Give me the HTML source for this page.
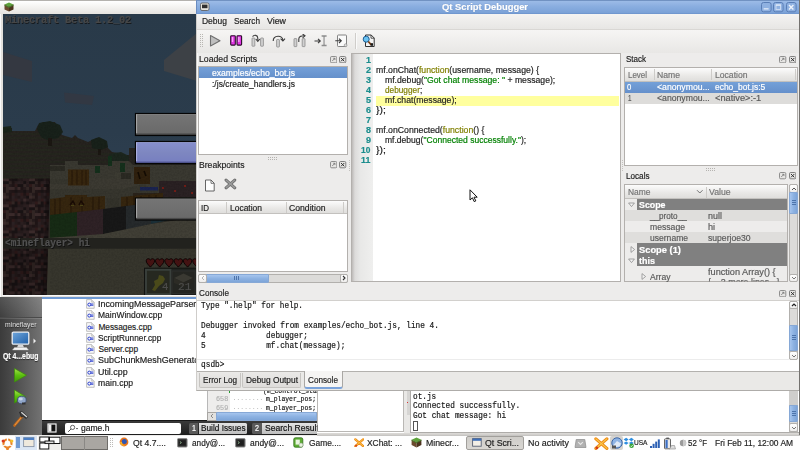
<!DOCTYPE html>
<html><head><meta charset="utf-8"><title>Qt Script Debugger</title>
<style>
html,body{margin:0;padding:0;}
body{width:800px;height:450px;overflow:hidden;position:relative;background:#edeceb;font-family:"Liberation Sans",sans-serif;}
div,span,svg{position:absolute;box-sizing:border-box;}
.t{white-space:pre;line-height:12px;height:12px;font-size:8.3px;color:#1f1f1f;transform-origin:0 50%;-webkit-text-stroke:.18px currentColor;}
.m{font-family:"Liberation Mono",monospace;font-size:8.3px;color:#151515;}
.px{font-family:"Liberation Mono",monospace;font-size:10px;font-weight:bold;}
.b{font-weight:bold;}
.w{color:#fff;}
.g{color:#747474;}
.g2{color:#5a5a5a;}
.tl{color:#1b8d8d;font-weight:bold;}
.kw{position:static;color:#808000;}
.st{position:static;color:#008000;}
.sm{font-size:7.4px;}
.hd{background:linear-gradient(#fcfcfc,#e9e8e6 60%,#dfdedc);border-bottom:1px solid #c3c1be;}
.sel{background:linear-gradient(#74a0d8,#6590cb);}
.sb{background:#dcdbd9;border:1px solid #b2b0ad;border-radius:2px;}
.th{background:linear-gradient(90deg,#a6c5ee,#8db2e2 50%,#7ea5d8);border:1px solid #86a8d6;border-radius:1px;}
.thh{background:linear-gradient(#a6c5ee,#8db2e2 50%,#7ea5d8);border:1px solid #86a8d6;border-radius:1px;}
.btn{background:linear-gradient(#ffffff,#eeedec);border:1px solid #b2b0ad;border-radius:2px;}
.dk{border:1px solid #7d7b78;border-radius:1.5px;background:#e4e3e1;}
</style></head><body>
<div style="left:0px;top:296px;width:800px;height:139px;background:#fff;"></div><div style="left:0px;top:297px;width:42px;height:138px;background:linear-gradient(90deg,#3b3b3b,#565656 50%,#737373);"></div><div style="left:0px;top:297px;width:42px;height:21px;background:linear-gradient(rgba(255,255,255,.12),rgba(255,255,255,.02));border-bottom:1px solid #4a4a4a;"></div><div style="left:0px;top:318px;width:42px;height:1px;background:rgba(255,255,255,.12);"></div><div style="left:42px;top:297px;width:155px;height:1.5px;background:#6f9ad3;"></div><svg style="left:11px;top:331px;" width="20" height="20" viewBox="0 0 20 20"><defs><linearGradient id="mg" x1="0" y1="0" x2="1" y2="1"><stop offset="0" stop-color="#6fa6dc"/><stop offset="1" stop-color="#1f5fa8"/></linearGradient></defs><rect x="1.2" y="1.2" width="16.6" height="12" rx="1.2" fill="url(#mg)" stroke="#e9eef4" stroke-width="1.3"/><path d="M7 14 L12 14 L13 16.5 L6 16.5 Z" fill="#d8d8d8"/><path d="M1.5 19 L3.5 16.5 L15.5 16.5 L17.5 19 Z" fill="#f2f2f2" stroke="#bbb" stroke-width=".4"/></svg><svg style="left:32.5px;top:338px;" width="4" height="6" viewBox="0 0 4 6"><path d="M0.5 0.5 L3 3 L0.5 5.5 Z" fill="#eee"/></svg><svg style="left:13px;top:367px;" width="16" height="17" viewBox="0 0 16 17"><defs><linearGradient id="pg" x1="0" y1="0" x2="0" y2="1"><stop offset="0" stop-color="#a6e24a"/><stop offset=".5" stop-color="#5cc010"/><stop offset="1" stop-color="#3f9a08"/></linearGradient></defs><path d="M1.5 1.5 L13.5 8.2 L1.5 15 Z" fill="url(#pg)" stroke="#3c8c0a" stroke-width=".7" stroke-linejoin="round"/></svg><svg style="left:13px;top:389px;" width="16" height="18" viewBox="0 0 16 18"><path d="M1.5 1 L12.5 7.5 L1.5 14 Z" fill="url(#pg)" stroke="#3c8c0a" stroke-width=".7" stroke-linejoin="round"/><ellipse cx="8.8" cy="11" rx="4.4" ry="3.8" fill="#8fa5c8" stroke="#3f4f72" stroke-width=".9"/><ellipse cx="7.8" cy="10" rx="2" ry="1.4" fill="#c8d4ea"/><rect x="9" y="13.5" width="3.5" height="2" fill="#333"/></svg><svg style="left:12px;top:410px;" width="18" height="18" viewBox="0 0 18 18"><path d="M2.5 15.5 L10.5 6" stroke="#c46a1c" stroke-width="2.6" stroke-linecap="round"/><path d="M3 15 L10 6.6" stroke="#e79a4a" stroke-width=".9"/><path d="M7.5 2.2 L9.8 1.5 L15.8 6.6 L14.2 8.6 L11.4 6.4 L9.4 7.2 Z" fill="#3a3a3a" stroke="#1c1c1c" stroke-width=".6"/><path d="M9.3 2.2 L15 7" stroke="#d4d4d4" stroke-width="1.3"/></svg><svg style="left:85.8px;top:299px;" width="9" height="10" viewBox="0 0 9 10"><path d="M0.6 0.6 L5.6 0.6 L8.2 3.2 L8.2 9.3 L0.6 9.3 Z" fill="#f7f7f7" stroke="#b3b3b3" stroke-width=".8"/><path d="M5.6 0.6 L5.6 3.2 L8.2 3.2" fill="#ddd" stroke="#b3b3b3" stroke-width=".6"/><circle cx="3.3" cy="5.6" r="1.5" fill="none" stroke="#2a3fd0" stroke-width="1"/><path d="M4.8 5 L7.4 5 M4.8 6.3 L7.4 6.3" stroke="#2a3fd0" stroke-width=".9"/></svg><svg style="left:85.8px;top:310.25px;" width="9" height="10" viewBox="0 0 9 10"><path d="M0.6 0.6 L5.6 0.6 L8.2 3.2 L8.2 9.3 L0.6 9.3 Z" fill="#f7f7f7" stroke="#b3b3b3" stroke-width=".8"/><path d="M5.6 0.6 L5.6 3.2 L8.2 3.2" fill="#ddd" stroke="#b3b3b3" stroke-width=".6"/><circle cx="3.3" cy="5.6" r="1.5" fill="none" stroke="#2a3fd0" stroke-width="1"/><path d="M4.8 5 L7.4 5 M4.8 6.3 L7.4 6.3" stroke="#2a3fd0" stroke-width=".9"/></svg><svg style="left:85.8px;top:321.5px;" width="9" height="10" viewBox="0 0 9 10"><path d="M0.6 0.6 L5.6 0.6 L8.2 3.2 L8.2 9.3 L0.6 9.3 Z" fill="#f7f7f7" stroke="#b3b3b3" stroke-width=".8"/><path d="M5.6 0.6 L5.6 3.2 L8.2 3.2" fill="#ddd" stroke="#b3b3b3" stroke-width=".6"/><circle cx="3.3" cy="5.6" r="1.5" fill="none" stroke="#2a3fd0" stroke-width="1"/><path d="M4.8 5 L7.4 5 M4.8 6.3 L7.4 6.3" stroke="#2a3fd0" stroke-width=".9"/></svg><svg style="left:85.8px;top:332.75px;" width="9" height="10" viewBox="0 0 9 10"><path d="M0.6 0.6 L5.6 0.6 L8.2 3.2 L8.2 9.3 L0.6 9.3 Z" fill="#f7f7f7" stroke="#b3b3b3" stroke-width=".8"/><path d="M5.6 0.6 L5.6 3.2 L8.2 3.2" fill="#ddd" stroke="#b3b3b3" stroke-width=".6"/><circle cx="3.3" cy="5.6" r="1.5" fill="none" stroke="#2a3fd0" stroke-width="1"/><path d="M4.8 5 L7.4 5 M4.8 6.3 L7.4 6.3" stroke="#2a3fd0" stroke-width=".9"/></svg><svg style="left:85.8px;top:344px;" width="9" height="10" viewBox="0 0 9 10"><path d="M0.6 0.6 L5.6 0.6 L8.2 3.2 L8.2 9.3 L0.6 9.3 Z" fill="#f7f7f7" stroke="#b3b3b3" stroke-width=".8"/><path d="M5.6 0.6 L5.6 3.2 L8.2 3.2" fill="#ddd" stroke="#b3b3b3" stroke-width=".6"/><circle cx="3.3" cy="5.6" r="1.5" fill="none" stroke="#2a3fd0" stroke-width="1"/><path d="M4.8 5 L7.4 5 M4.8 6.3 L7.4 6.3" stroke="#2a3fd0" stroke-width=".9"/></svg><svg style="left:85.8px;top:355.25px;" width="9" height="10" viewBox="0 0 9 10"><path d="M0.6 0.6 L5.6 0.6 L8.2 3.2 L8.2 9.3 L0.6 9.3 Z" fill="#f7f7f7" stroke="#b3b3b3" stroke-width=".8"/><path d="M5.6 0.6 L5.6 3.2 L8.2 3.2" fill="#ddd" stroke="#b3b3b3" stroke-width=".6"/><circle cx="3.3" cy="5.6" r="1.5" fill="none" stroke="#2a3fd0" stroke-width="1"/><path d="M4.8 5 L7.4 5 M4.8 6.3 L7.4 6.3" stroke="#2a3fd0" stroke-width=".9"/></svg><svg style="left:85.8px;top:366.5px;" width="9" height="10" viewBox="0 0 9 10"><path d="M0.6 0.6 L5.6 0.6 L8.2 3.2 L8.2 9.3 L0.6 9.3 Z" fill="#f7f7f7" stroke="#b3b3b3" stroke-width=".8"/><path d="M5.6 0.6 L5.6 3.2 L8.2 3.2" fill="#ddd" stroke="#b3b3b3" stroke-width=".6"/><circle cx="3.3" cy="5.6" r="1.5" fill="none" stroke="#2a3fd0" stroke-width="1"/><path d="M4.8 5 L7.4 5 M4.8 6.3 L7.4 6.3" stroke="#2a3fd0" stroke-width=".9"/></svg><svg style="left:85.8px;top:377.75px;" width="9" height="10" viewBox="0 0 9 10"><path d="M0.6 0.6 L5.6 0.6 L8.2 3.2 L8.2 9.3 L0.6 9.3 Z" fill="#f7f7f7" stroke="#b3b3b3" stroke-width=".8"/><path d="M5.6 0.6 L5.6 3.2 L8.2 3.2" fill="#ddd" stroke="#b3b3b3" stroke-width=".6"/><circle cx="3.3" cy="5.6" r="1.5" fill="none" stroke="#2a3fd0" stroke-width="1"/><path d="M4.8 5 L7.4 5 M4.8 6.3 L7.4 6.3" stroke="#2a3fd0" stroke-width=".9"/></svg><div style="left:42px;top:420px;width:275px;height:15px;background:linear-gradient(#3a3a3a,#1d1d1d);border-top:1px solid #161616;"></div><svg style="left:47px;top:423px;" width="10" height="10" viewBox="0 0 10 10"><rect x="1" y="1" width="8" height="8" fill="#111" stroke="#f2f2f2" stroke-width="1.2"/><rect x="1.4" y="1.4" width="3" height="7.2" fill="#f2f2f2"/></svg><div style="left:64.5px;top:422.5px;width:116px;height:11.5px;background:#fff;border-radius:2px;"></div><svg style="left:67px;top:424px;" width="12" height="9" viewBox="0 0 12 9"><circle cx="5.6" cy="3.4" r="2.1" fill="none" stroke="#555" stroke-width=".9"/><path d="M4 5 L1.2 7.8" stroke="#555" stroke-width="1"/><path d="M9 4.6 L11 4.6" stroke="#555" stroke-width=".9"/></svg><div style="left:189px;top:422.5px;width:9px;height:11.5px;background:#5a5a5a;border-radius:1.5px 0 0 1.5px;"></div><div style="left:198.5px;top:422.5px;width:48.5px;height:11.5px;background:linear-gradient(#e4e4e4,#bdbdbd);border-radius:0 1.5px 1.5px 0;"></div><div style="left:252px;top:422.5px;width:9.5px;height:11.5px;background:#5a5a5a;border-radius:1.5px 0 0 1.5px;"></div><div style="left:262px;top:422.5px;width:55px;height:11.5px;background:linear-gradient(#e4e4e4,#bdbdbd);"></div><div style="left:207px;top:388px;width:110px;height:24px;background:#fff;border-left:1px solid #b8b8b8;"></div><div style="left:208px;top:388px;width:21.5px;height:24px;background:#eeedec;"></div><div style="left:207px;top:411.5px;width:110px;height:9px;background:#e2e1df;border:1px solid #a8a6a3;"></div><div class="thh" style="left:215.5px;top:411.5px;width:101.5px;height:9px;"></div><svg style="left:208px;top:412px;" width="8" height="8" viewBox="0 0 8 8"><path d="M5 2 L3 4 L5 6" fill="none" stroke="#888" stroke-width="1"/></svg><svg style="left:234px;top:399.0px;" width="32" height="2" viewBox="0 0 32 2"><rect x="0.0" y="0" width="1" height="1" fill="#c4c4c4"/><rect x="3.9" y="0" width="1" height="1" fill="#c4c4c4"/><rect x="7.7" y="0" width="1" height="1" fill="#c4c4c4"/><rect x="11.6" y="0" width="1" height="1" fill="#c4c4c4"/><rect x="15.4" y="0" width="1" height="1" fill="#c4c4c4"/><rect x="19.2" y="0" width="1" height="1" fill="#c4c4c4"/><rect x="23.1" y="0" width="1" height="1" fill="#c4c4c4"/><rect x="26.9" y="0" width="1" height="1" fill="#c4c4c4"/></svg><svg style="left:234px;top:407.8px;" width="32" height="2" viewBox="0 0 32 2"><rect x="0.0" y="0" width="1" height="1" fill="#c4c4c4"/><rect x="3.9" y="0" width="1" height="1" fill="#c4c4c4"/><rect x="7.7" y="0" width="1" height="1" fill="#c4c4c4"/><rect x="11.6" y="0" width="1" height="1" fill="#c4c4c4"/><rect x="15.4" y="0" width="1" height="1" fill="#c4c4c4"/><rect x="19.2" y="0" width="1" height="1" fill="#c4c4c4"/><rect x="23.1" y="0" width="1" height="1" fill="#c4c4c4"/><rect x="26.9" y="0" width="1" height="1" fill="#c4c4c4"/></svg><div style="left:229px;top:389px;width:1px;height:4px;background:#1f9a2a;"></div><div style="left:317px;top:390px;width:87px;height:42.3px;background:#fff;border:1px solid #b9b7b4;"></div><div style="left:404px;top:390px;width:6.5px;height:45px;background:#e9e8e6;"></div><div style="left:410px;top:390px;width:390px;height:43.3px;background:#fff;border:1px solid #aeaca9;border-right:none;"></div><div style="left:407.3px;top:391px;width:2.7px;height:24px;background:#d6d5d3;"></div><div style="left:407.3px;top:401.5px;width:1px;height:1.5px;background:#d33;"></div><div style="left:412.5px;top:421px;width:5px;height:10px;background:#fff;border:1px solid #555;"></div><div class="sb" style="left:789px;top:391px;width:9px;height:42px;"></div><div style="left:789px;top:391px;width:9px;height:14px;background:#cfcecc;"></div><div class="th" style="left:789px;top:405px;width:9px;height:17px;"></div><svg style="left:791.5px;top:410.5px;" width="4" height="6" viewBox="0 0 4 6"><rect x="0" y="0" width="4" height="1" fill="#4d74ab"/><rect x="0" y="2" width="4" height="1" fill="#4d74ab"/><rect x="0" y="4" width="4" height="1" fill="#4d74ab"/></svg><div class="btn" style="left:789px;top:422.5px;width:9px;height:9.5px;"></div><svg style="left:789.5px;top:423.5px;" width="8" height="8" viewBox="0 0 8 8"><path d="M2 3 L4 5 L6 3" fill="none" stroke="#777" stroke-width="1"/></svg><div style="left:317px;top:433px;width:483px;height:3px;background:linear-gradient(#dddbd8,#d2d0cd 50%,#b0aeab 75%,#f4f4f3);"></div>
<span class="t w sm" style="left:5px;top:319.0px;transform:scaleX(0.924);color:#e2e2e2;text-shadow:0 1px 1px #222;-webkit-text-stroke:0;">mineflayer</span>
<span class="t b w" style="left:2.5px;top:350.0px;transform:scaleX(0.828);text-shadow:0 1px 1px #222;">Qt 4...ebug</span>
<span class="t" style="left:80.8px;top:422.0px;transform:scaleX(1.029);">game.h</span>
<span class="t w" style="left:191.5px;top:422.0px;transform:scaleX(0.865);">1</span>
<span class="t" style="left:200.5px;top:422.0px;transform:scaleX(0.995);color:#111;">Build Issues</span>
<span class="t w" style="left:255px;top:422.0px;transform:scaleX(0.865);">2</span>
<span class="t" style="left:264.5px;top:422.0px;transform:scaleX(1.033);color:#111;clip-path:inset(0 5.5px 0 0);">Search Results</span>
<span class="t m" style="left:215.5px;top:393.3px;transform:scaleX(0.916);color:#b2b2b2;font-size:7.4px;">658</span>
<span class="t m" style="left:215.5px;top:402.0px;transform:scaleX(0.916);color:#b2b2b2;font-size:7.4px;">659</span>
<span class="t m" style="left:262.7px;top:384.6px;transform:scaleX(0.866);font-size:7.4px;">(m_control_sta</span>
<span class="t m" style="left:266px;top:393.3px;transform:scaleX(0.867);font-size:7.4px;">m_player_pos;</span>
<span class="t m" style="left:266px;top:402.0px;transform:scaleX(0.867);font-size:7.4px;">m_player_pos;</span>
<span class="t m" style="left:412.8px;top:390.5px;transform:scaleX(0.931);">ot.js</span>
<span class="t m" style="left:412.8px;top:400.3px;transform:scaleX(0.936);">Connected successfully.</span>
<span class="t m" style="left:412.8px;top:410.0px;transform:scaleX(0.936);">Got chat message: hi</span>
<span class="t" style="left:98.4px;top:298.0px;transform:scaleX(1.071);">IncomingMessageParser.cpp</span>
<span class="t" style="left:98.4px;top:309.2px;transform:scaleX(1.022);">MainWindow.cpp</span>
<span class="t" style="left:98.4px;top:320.5px;">Messages.cpp</span>
<span class="t" style="left:98.4px;top:331.8px;transform:scaleX(0.994);">ScriptRunner.cpp</span>
<span class="t" style="left:98.4px;top:343.0px;">Server.cpp</span>
<span class="t" style="left:98.4px;top:354.2px;transform:scaleX(1.080);">SubChunkMeshGenerator.cpp</span>
<span class="t" style="left:98.4px;top:365.5px;transform:scaleX(1.070);">Util.cpp</span>
<span class="t" style="left:98.4px;top:376.8px;transform:scaleX(1.042);">main.cpp</span>
<div style="left:0px;top:0px;width:197px;height:297px;background:#e3e1dd;border-left:1px solid #fafafa;"></div><div style="left:0px;top:0px;width:197px;height:13px;background:linear-gradient(#ffffff,#efeeec 50%,#e2e0dc);"></div><div style="left:2.5px;top:13px;width:1px;height:282px;background:linear-gradient(#293a49 0,#2b3c4c 40%,#26231f 41%,#26231f 58%,#241a1b 59%,#241a1b);"></div><div style="left:2px;top:294.5px;width:195px;height:1px;background:#f8f8f8;"></div><svg style="left:3px;top:13px;" width="194" height="282" viewBox="0 0 194 282"><defs><linearGradient id="sky" x1="0" y1="0" x2="0" y2="1"><stop offset="0" stop-color="#293a49"/><stop offset=".7" stop-color="#2b3c4c"/><stop offset="1" stop-color="#2e3f50"/></linearGradient><filter id="nz" x="0" y="0" width="100%" height="100%" color-interpolation-filters="sRGB"><feTurbulence type="fractalNoise" baseFrequency="0.55" numOctaves="2" seed="7" result="n"/><feColorMatrix in="n" type="matrix" values="0 0 0 0 0  0 0 0 0 0  0 0 0 0 0  0 0 0 1.6 -0.55"/><feComposite operator="in" in2="SourceGraphic"/></filter><linearGradient id="bg1" x1="0" y1="0" x2="0" y2="1"><stop offset="0" stop-color="#b8b8b8"/><stop offset=".07" stop-color="#747474"/><stop offset=".5" stop-color="#6f6f6f"/><stop offset=".88" stop-color="#6a6a6a"/><stop offset=".93" stop-color="#4a4a4a"/><stop offset="1" stop-color="#444"/></linearGradient><linearGradient id="bg2" x1="0" y1="0" x2="0" y2="1"><stop offset="0" stop-color="#c4c8f2"/><stop offset=".07" stop-color="#868ecc"/><stop offset=".5" stop-color="#7e87c0"/><stop offset=".88" stop-color="#7880c0"/><stop offset=".93" stop-color="#5a60a0"/><stop offset="1" stop-color="#545a98"/></linearGradient><pattern id="np" width="26.1" height="26.1" patternUnits="userSpaceOnUse"><rect width="26.1" height="26.1" fill="#241a1b"/><rect x="0.0" y="0.0" width="2.9" height="2.9" fill="#3a2a2a"/><rect x="2.9" y="0.0" width="2.9" height="2.9" fill="#322624"/><rect x="5.8" y="0.0" width="2.9" height="2.9" fill="#1e1415"/><rect x="8.7" y="0.0" width="2.9" height="2.9" fill="#2b2022"/><rect x="14.5" y="0.0" width="2.9" height="2.9" fill="#201617"/><rect x="17.4" y="0.0" width="2.9" height="2.9" fill="#2a1e1f"/><rect x="23.2" y="0.0" width="2.9" height="2.9" fill="#181213"/><rect x="2.9" y="2.9" width="2.9" height="2.9" fill="#1e1415"/><rect x="5.8" y="2.9" width="2.9" height="2.9" fill="#201617"/><rect x="8.7" y="2.9" width="2.9" height="2.9" fill="#2a1e1f"/><rect x="11.6" y="2.9" width="2.9" height="2.9" fill="#2e1a1a"/><rect x="14.5" y="2.9" width="2.9" height="2.9" fill="#2b2022"/><rect x="20.3" y="2.9" width="2.9" height="2.9" fill="#3a2a2a"/><rect x="23.2" y="2.9" width="2.9" height="2.9" fill="#2a1e1f"/><rect x="2.9" y="5.8" width="2.9" height="2.9" fill="#2a1e1f"/><rect x="5.8" y="5.8" width="2.9" height="2.9" fill="#2e1a1a"/><rect x="8.7" y="5.8" width="2.9" height="2.9" fill="#322624"/><rect x="11.6" y="5.8" width="2.9" height="2.9" fill="#181213"/><rect x="14.5" y="5.8" width="2.9" height="2.9" fill="#2e1a1a"/><rect x="17.4" y="5.8" width="2.9" height="2.9" fill="#181213"/><rect x="23.2" y="5.8" width="2.9" height="2.9" fill="#181213"/><rect x="0.0" y="8.7" width="2.9" height="2.9" fill="#3a2a2a"/><rect x="2.9" y="8.7" width="2.9" height="2.9" fill="#3a2a2a"/><rect x="5.8" y="8.7" width="2.9" height="2.9" fill="#201617"/><rect x="8.7" y="8.7" width="2.9" height="2.9" fill="#181213"/><rect x="11.6" y="8.7" width="2.9" height="2.9" fill="#181213"/><rect x="20.3" y="8.7" width="2.9" height="2.9" fill="#2a1e1f"/><rect x="23.2" y="8.7" width="2.9" height="2.9" fill="#2a1e1f"/><rect x="0.0" y="11.6" width="2.9" height="2.9" fill="#181213"/><rect x="2.9" y="11.6" width="2.9" height="2.9" fill="#181213"/><rect x="5.8" y="11.6" width="2.9" height="2.9" fill="#322624"/><rect x="8.7" y="11.6" width="2.9" height="2.9" fill="#1e1415"/><rect x="11.6" y="11.6" width="2.9" height="2.9" fill="#2a1e1f"/><rect x="14.5" y="11.6" width="2.9" height="2.9" fill="#2b2022"/><rect x="17.4" y="11.6" width="2.9" height="2.9" fill="#2a1e1f"/><rect x="20.3" y="11.6" width="2.9" height="2.9" fill="#181213"/><rect x="23.2" y="11.6" width="2.9" height="2.9" fill="#2a1e1f"/><rect x="0.0" y="14.5" width="2.9" height="2.9" fill="#2e1a1a"/><rect x="2.9" y="14.5" width="2.9" height="2.9" fill="#322624"/><rect x="8.7" y="14.5" width="2.9" height="2.9" fill="#1e1415"/><rect x="11.6" y="14.5" width="2.9" height="2.9" fill="#2e1a1a"/><rect x="14.5" y="14.5" width="2.9" height="2.9" fill="#181213"/><rect x="17.4" y="14.5" width="2.9" height="2.9" fill="#181213"/><rect x="20.3" y="14.5" width="2.9" height="2.9" fill="#322624"/><rect x="0.0" y="17.4" width="2.9" height="2.9" fill="#1e1415"/><rect x="2.9" y="17.4" width="2.9" height="2.9" fill="#322624"/><rect x="5.8" y="17.4" width="2.9" height="2.9" fill="#3a2a2a"/><rect x="8.7" y="17.4" width="2.9" height="2.9" fill="#3a2a2a"/><rect x="14.5" y="17.4" width="2.9" height="2.9" fill="#3a2a2a"/><rect x="17.4" y="17.4" width="2.9" height="2.9" fill="#1e1415"/><rect x="23.2" y="17.4" width="2.9" height="2.9" fill="#322624"/><rect x="0.0" y="20.3" width="2.9" height="2.9" fill="#1e1415"/><rect x="2.9" y="20.3" width="2.9" height="2.9" fill="#322624"/><rect x="5.8" y="20.3" width="2.9" height="2.9" fill="#201617"/><rect x="8.7" y="20.3" width="2.9" height="2.9" fill="#1e1415"/><rect x="11.6" y="20.3" width="2.9" height="2.9" fill="#181213"/><rect x="14.5" y="20.3" width="2.9" height="2.9" fill="#201617"/><rect x="17.4" y="20.3" width="2.9" height="2.9" fill="#201617"/><rect x="20.3" y="20.3" width="2.9" height="2.9" fill="#181213"/><rect x="0.0" y="23.2" width="2.9" height="2.9" fill="#322624"/><rect x="5.8" y="23.2" width="2.9" height="2.9" fill="#1e1415"/><rect x="8.7" y="23.2" width="2.9" height="2.9" fill="#2e1a1a"/><rect x="14.5" y="23.2" width="2.9" height="2.9" fill="#2b2022"/><rect x="17.4" y="23.2" width="2.9" height="2.9" fill="#2e1a1a"/><rect x="20.3" y="23.2" width="2.9" height="2.9" fill="#1e1415"/><rect x="23.2" y="23.2" width="2.9" height="2.9" fill="#2e1a1a"/></pattern></defs><rect x="0" y="0" width="194" height="170" fill="url(#sky)"/><rect x="0" y="165" width="194" height="117" fill="#2b2a24"/><path d="M0 39 L29 48 L29 69 L0 62 Z" fill="#343841"/><path d="M61 79.5 L91 83 L89 92 L62 89.5 Z" fill="#323843"/><path d="M161 47 L194 20 L194 68 L161 58 Z" fill="#3d4146"/><path d="M0 115 L9 115 L9 118 L32 118 L35 112 L40 109 L52 109 L55 115 L59 122 L69 125 L72 122 L75 125 L85 129 L89 127 L94 125 L102 127 L105 135 L109 139 L115 140 L122 142 L132 142 L137 145 L137 170 L0 170 Z" fill="#26231f"/><path d="M0 121 L56 121 M0 125 L66 125 M0 129 L76 129 M0 133 L87 133 M0 137 L97 137 M0 141 L108 141 M0 145 L118 145 M0 149 L128 149 M0 153 L130 153 M0 157 L130 157 M0 161 L130 161 M0 165 L130 165" stroke="#22381e" stroke-width=".8" opacity=".4"/><path d="M36 110 L47 108 L57 112 L60 119 L55 125 L44 127 L38 124 L34 116 Z" fill="#18211a"/><rect x="45" y="125" width="4" height="8" fill="#1b1712"/><path d="M88 127 L96 124 L104 128 L105 134 L98 137 L89 135 Z" fill="#18211a"/><rect x="95" y="136" width="3" height="6" fill="#1b1712"/><path d="M0 114 L8 113 L9 119 L0 120 Z" fill="#1a241a"/><path d="M106 141 L118 139 L126 143 L126 150 L106 150 Z" fill="#1c261e"/><rect x="126" y="135" width="68" height="40" fill="#262420"/><path d="M47 152 L62 152 L62 148 L75 148 L75 152 L108 152 L108 148 L126 148 L130 152 L194 152 L194 200 L47 200 Z" fill="#3a3931"/><path d="M47 166 L130 166 L150 176 L194 176 L194 200 L47 200 Z" fill="#37362e"/><path d="M47 171 L80 171 L80 166 L112 166 L112 160 L140 160 L140 171 L120 176 L47 176 Z" fill="#3d3c33" opacity=".8"/><path d="M47 158 L62 158 L62 153 L47 153 Z M118 160 L128 160 L128 166 L118 166 Z" fill="#2b2a23"/><rect x="105" y="143" width="4" height="10" fill="#15301c"/><rect x="92" y="153" width="5" height="7" fill="#15301c"/><rect x="117" y="150" width="5" height="9" fill="#15301c"/><rect x="65" y="156.5" width="21" height="16" fill="#38270f"/><path d="M69 157 L69 172 M74 157 L74 172 M79 157 L79 172 M83 157 L83 172" stroke="#2a1c0b" stroke-width="1.2"/><rect x="131" y="154" width="16" height="17" fill="#30210e"/><path d="M135 159 L137 166 M141 158 L143 163" stroke="#140c04" stroke-width="1.6"/><rect x="137" y="174" width="18" height="3.5" fill="#1b2450"/><rect x="156" y="168" width="38" height="16" fill="#2a2123"/><circle cx="160" cy="175" r="1" fill="#8a1c14"/><circle cx="172" cy="178" r="1" fill="#8a1c14"/><circle cx="182" cy="173" r="1" fill="#8a1c14"/><circle cx="189" cy="180" r="1" fill="#8a1c14"/><rect x="130" y="180" width="30" height="10" fill="#2a231b"/><path d="M47 186 L62 184 L62 182 L84 182 L84 184 L102 183 L102 202 L47 204 Z" fill="#36260f"/><path d="M52 186 L52 203 M57 185 L57 203 M68 184 L68 202 M79 184 L79 202 M90 184 L90 202 M96 184 L96 202" stroke="#281a0a" stroke-width="1.2"/><path d="M67 192 L70 188 L72 192 M76 192 L78 188 L81 192" fill="none" stroke="#1a0c05" stroke-width="1.4"/><path d="M68 192.5 L71 192.5 M77 192.5 L80 192.5" stroke="#4a4416" stroke-width="1"/><path d="M118 184 L160 180 L160 196 L118 199 Z" fill="#36260f"/><path d="M124 184 L124 198 M131 183 L131 198 M138 183 L138 197 M146 182 L146 197 M153 182 L153 196" stroke="#281a0a" stroke-width="1.2"/><path d="M104 186 L116 185 L116 199 L104 200 Z" fill="#34332b"/><path d="M47 202 L74 199 L74 224 L47 225 Z" fill="#172b15"/><path d="M74 199 L100 196 L100 221 L74 224 Z" fill="#2f2226"/><path d="M100 196 L123 193 L123 217 L100 221 Z" fill="#181818"/><path d="M123 193 L148 190 L148 211 L123 217 Z" fill="#262a2c"/><path d="M148 190 L170 188 L170 206 L148 211 Z" fill="#1b3038"/><path d="M44 225 L100 221 L148 211 L194 204 L194 236 L44 236 Z" fill="#413f36"/><rect x="42" y="236" width="152" height="46" fill="#37362d"/><path d="M0 165.5 L47 165.5 L43.7 282 L0 282 Z" fill="url(#np)"/><path d="M0 236 L45 236 L43.7 282 L0 282 Z" fill="#000" opacity=".15"/><path d="M43 165.5 L47 165.5 L43.7 282 L39.7 282 Z" fill="#000" opacity=".25"/><path d="M0 115 L9 115 L9 118 L32 118 L35 112 L40 109 L52 109 L55 115 L59 122 L69 125 L72 122 L75 125 L85 129 L89 127 L94 125 L102 127 L105 135 L109 139 L115 140 L122 142 L132 142 L137 145 L137 170 L0 170 Z M47 150 L194 150 L194 282 L47 282 Z" fill="#000" filter="url(#nz)" opacity=".14"/><rect x="132.5" y="100.5" width="64" height="22" fill="url(#bg1)" stroke="#050505" stroke-width="1.2"/><rect x="133.2" y="101.3" width=".9" height="19" fill="#b4b4b4"/><rect x="132.5" y="128.5" width="64" height="22" fill="url(#bg2)" stroke="#050505" stroke-width="1.2"/><rect x="133.2" y="129.3" width=".9" height="19" fill="#b8bcec"/><rect x="132.5" y="185" width="64" height="22" fill="url(#bg1)" stroke="#050505" stroke-width="1.2"/><rect x="133.2" y="185.8" width=".9" height="19" fill="#b4b4b4"/><rect x="0" y="225" width="194" height="10.8" fill="#21211d" opacity=".96"/><path d="M0 2.6 C0 0.4 2.4 -0.4 4.2 1.6 C6 -0.4 8.4 0.4 8.4 2.6 C8.4 5 5.6 7 4.2 8.8 C2.8 7 0 5 0 2.6 Z" transform="translate(143.2,245.3)" fill="#441212" stroke="#0c0303" stroke-width="1"/><path d="M0 2.6 C0 0.4 2.4 -0.4 4.2 1.6 C6 -0.4 8.4 0.4 8.4 2.6 C8.4 5 5.6 7 4.2 8.8 C2.8 7 0 5 0 2.6 Z" transform="translate(152.5,245.3)" fill="#441212" stroke="#0c0303" stroke-width="1"/><path d="M0 2.6 C0 0.4 2.4 -0.4 4.2 1.6 C6 -0.4 8.4 0.4 8.4 2.6 C8.4 5 5.6 7 4.2 8.8 C2.8 7 0 5 0 2.6 Z" transform="translate(161.79999999999998,245.3)" fill="#441212" stroke="#0c0303" stroke-width="1"/><path d="M0 2.6 C0 0.4 2.4 -0.4 4.2 1.6 C6 -0.4 8.4 0.4 8.4 2.6 C8.4 5 5.6 7 4.2 8.8 C2.8 7 0 5 0 2.6 Z" transform="translate(171.1,245.3)" fill="#441212" stroke="#0c0303" stroke-width="1"/><path d="M0 2.6 C0 0.4 2.4 -0.4 4.2 1.6 C6 -0.4 8.4 0.4 8.4 2.6 C8.4 5 5.6 7 4.2 8.8 C2.8 7 0 5 0 2.6 Z" transform="translate(180.39999999999998,245.3)" fill="#441212" stroke="#0c0303" stroke-width="1"/><path d="M0 2.6 C0 0.4 2.4 -0.4 4.2 1.6 C6 -0.4 8.4 0.4 8.4 2.6 C8.4 5 5.6 7 4.2 8.8 C2.8 7 0 5 0 2.6 Z" transform="translate(189.7,245.3)" fill="#441212" stroke="#0c0303" stroke-width="1"/><rect x="141.5" y="255.2" width="53" height="27" fill="#20221f" stroke="#121311" stroke-width="1"/><rect x="143" y="256.8" width="24.5" height="24.4" fill="#262820" stroke="#3a403c" stroke-width="1.8"/><rect x="169" y="258" width="23" height="22.5" fill="#242521" stroke="#2c2e2b" stroke-width="1.2"/><path d="M149 277 L152 272 L151 268 L155 266 L156 262 L160 263 L162 266 L160 270 L156 273 L152 278 Z" fill="#4a4a1a"/><path d="M171 265 L180.5 260.5 L190 265 L180.5 269.5 Z" fill="#3a3932"/><path d="M171 265 L180.5 269.5 L180.5 274 L171 270 Z" fill="#2c2b25"/><path d="M190 265 L180.5 269.5 L180.5 274 L190 270 Z" fill="#262520"/></svg><div style="left:0px;top:0px;width:197px;height:13.6px;background:linear-gradient(#ffffff,#f4f3f1 45%,#e6e4e0);border-top:1px solid #b4b2ae;"></div><svg style="left:4px;top:1.5px;" width="10" height="10" viewBox="0 0 10 10"><path d="M5 0.5 L9.5 2.5 L5 4.6 L0.5 2.5 Z" fill="#5da33a"/><path d="M0.5 2.5 L5 4.6 L5 9.6 L0.5 7.4 Z" fill="#6b4a2e"/><path d="M9.5 2.5 L5 4.6 L5 9.6 L9.5 7.4 Z" fill="#4d331e"/><path d="M0.5 2.5 L5 4.6 L9.5 2.5 L9.5 3.6 L5 5.7 L0.5 3.6 Z" fill="#467f2a"/></svg>
<span class="t px" style="left:5px;top:15.3px;transform:scaleX(1.052);color:#474747;letter-spacing:-.3px;text-shadow:.8px .8px 0 #161a1e;">Minecraft Beta 1.2_02</span>
<span class="t px" style="left:5px;top:237.5px;transform:scaleX(0.944);color:#515151;text-shadow:.8px .8px 0 #121212;">&lt;mineflayer&gt; hi</span>
<span class="t px" style="left:162px;top:281.6px;transform:scaleX(1.081);color:#4c4c4a;font-weight:normal;">4</span>
<span class="t px" style="left:178px;top:281.6px;transform:scaleX(1.124);color:#4c4c4a;font-weight:normal;">21</span>
<div style="left:195.5px;top:0px;width:604.5px;height:391px;background:#edeceb;border-left:1px solid #cfcdca;border-bottom:1px solid #aeaca9;"></div><div style="left:196.5px;top:13px;width:1px;height:377px;background:#f8f8f7;"></div><div style="left:799px;top:0px;width:1px;height:435px;background:#74726f;"></div><div style="left:195.5px;top:0px;width:603.5px;height:13.5px;background:linear-gradient(#9cbbe7,#8aaee0 45%,#7aa1d7);border-top:1px solid #7192c2;border-left:1px solid #6a8cc0;border-bottom:1px solid #7097cf;"></div><svg style="left:200px;top:2px;" width="10" height="10" viewBox="0 0 10 10"><rect x="0.5" y="1" width="8.5" height="7.5" rx="1.5" fill="#e8e6e0" stroke="#555" stroke-width=".8"/><rect x="2" y="2.6" width="5.5" height="3.6" fill="#2f2f2f"/></svg><svg style="left:760.5px;top:2px;" width="11" height="11" viewBox="0 0 11 11"><rect x=".5" y=".5" width="9.6" height="9.3" rx="2" fill="#8fb1e1" stroke="#5a7eb6" stroke-width="1"/><rect x="2.6" y="6.2" width="5" height="1.3" fill="#e3ecf9"/></svg><svg style="left:773px;top:2px;" width="11" height="11" viewBox="0 0 11 11"><rect x=".5" y=".5" width="9.6" height="9.3" rx="2" fill="#8fb1e1" stroke="#5a7eb6" stroke-width="1"/><rect x="3" y="2.8" width="4.6" height="4.6" fill="none" stroke="#d3e0f4" stroke-width=".9"/><rect x="3" y="2.6" width="4.6" height="1.2" fill="#dfe9f7"/></svg><svg style="left:786px;top:2px;" width="11" height="11" viewBox="0 0 11 11"><rect x=".5" y=".5" width="9.6" height="9.3" rx="2" fill="#8fb1e1" stroke="#5a7eb6" stroke-width="1"/><path d="M3 3 L7.4 7.4 M7.4 3 L3 7.4" stroke="#eef3fb" stroke-width="1.4"/></svg><div style="left:197px;top:13.5px;width:602px;height:15.5px;background:linear-gradient(#f4f3f2,#e7e6e4);"></div><div style="left:197px;top:29px;width:602px;height:24px;background:linear-gradient(#f6f5f4,#e8e7e5);border-top:1px solid #fbfbfb;"></div><div style="left:197px;top:28.5px;width:602px;height:1px;background:#d9d7d4;"></div><svg style="left:199px;top:34px;" width="5" height="14" viewBox="0 0 5 14"><rect x="1" y="0" width="1" height="1" fill="#b9b7b3"/><rect x="1" y="2" width="1" height="1" fill="#b9b7b3"/><rect x="1" y="4" width="1" height="1" fill="#b9b7b3"/><rect x="1" y="6" width="1" height="1" fill="#b9b7b3"/><rect x="1" y="8" width="1" height="1" fill="#b9b7b3"/><rect x="1" y="10" width="1" height="1" fill="#b9b7b3"/><rect x="1" y="12" width="1" height="1" fill="#b9b7b3"/><rect x="3" y="0" width="1" height="1" fill="#b9b7b3"/><rect x="3" y="2" width="1" height="1" fill="#b9b7b3"/><rect x="3" y="4" width="1" height="1" fill="#b9b7b3"/><rect x="3" y="6" width="1" height="1" fill="#b9b7b3"/><rect x="3" y="8" width="1" height="1" fill="#b9b7b3"/><rect x="3" y="10" width="1" height="1" fill="#b9b7b3"/><rect x="3" y="12" width="1" height="1" fill="#b9b7b3"/></svg><svg style="left:209px;top:34px;" width="13" height="14" viewBox="0 0 13 14"><path d="M1.5 1.5 L11 6.7 L1.5 12 Z" fill="#bfbfbf" stroke="#6f6f6f" stroke-width="1.1" stroke-linejoin="round"/></svg><svg style="left:230px;top:35px;" width="13" height="11" viewBox="0 0 13 11"><rect x=".7" y=".7" width="4.6" height="9.4" rx=".8" fill="#e338e6" stroke="#2b0b2b" stroke-width="1.1"/><rect x="7" y=".7" width="4.6" height="9.4" rx=".8" fill="#e338e6" stroke="#2b0b2b" stroke-width="1.1"/><rect x="1.8" y="2" width="1.4" height="5" fill="#f9a5fa"/><rect x="8.1" y="2" width="1.4" height="5" fill="#f9a5fa"/></svg><svg style="left:250.5px;top:34px;" width="14" height="14" viewBox="0 0 14 14"><rect x="1" y="4" width="2.8" height="8.2" rx=".5" fill="#d0d0d0" stroke="#8a8a8a" stroke-width=".8"/><rect x="9.6" y="4" width="2.8" height="8.2" rx=".5" fill="#d0d0d0" stroke="#8a8a8a" stroke-width=".8"/><path d="M1.6 2.6 C3 0.6 6.8 0.8 6.8 4.2 L6.8 6.6" fill="none" stroke="#3c3c3c" stroke-width="1.1"/><path d="M4.8 5 L6.8 7.4 L8.8 5" fill="none" stroke="#3c3c3c" stroke-width="1.1"/></svg><svg style="left:272px;top:34px;" width="14" height="14" viewBox="0 0 14 14"><rect x="4.6" y="5.5" width="2.8" height="7.5" rx=".6" fill="#d0d0d0" stroke="#8a8a8a" stroke-width=".8"/><path d="M1.2 7 C1.2 0.8 10.8 0.8 10.8 6" fill="none" stroke="#3c3c3c" stroke-width="1.1"/><path d="M8.6 4.6 L10.9 6.9 L13 4.6" fill="none" stroke="#3c3c3c" stroke-width="1.1"/></svg><svg style="left:293px;top:34px;" width="14" height="14" viewBox="0 0 14 14"><rect x="1" y="4.6" width="2.8" height="8" rx=".5" fill="#d0d0d0" stroke="#8a8a8a" stroke-width=".8"/><rect x="9.2" y="4.6" width="2.8" height="8" rx=".5" fill="#d0d0d0" stroke="#8a8a8a" stroke-width=".8"/><path d="M5.8 8 L5.8 5 C5.8 2.2 8.6 1.8 11.4 1.8" fill="none" stroke="#3c3c3c" stroke-width="1.1"/><path d="M9.6 0 L12 1.8 L9.6 3.8" fill="none" stroke="#3c3c3c" stroke-width="1.1"/></svg><svg style="left:314px;top:34px;" width="14" height="14" viewBox="0 0 14 14"><path d="M0.5 7 L6 7 M4 4.8 L6.3 7 L4 9.2" fill="none" stroke="#3c3c3c" stroke-width="1.1"/><path d="M7.6 2 L12.6 2 M10.1 2 L10.1 11.6 M7.6 11.6 L12.6 11.6" fill="none" stroke="#8d8d8d" stroke-width="1.5"/><path d="M10.1 3 L10.1 10.6" stroke="#dcdcdc" stroke-width=".6"/></svg><svg style="left:335px;top:34px;" width="14" height="14" viewBox="0 0 14 14"><rect x="2.5" y="1" width="9" height="11.5" rx=".8" fill="#fafafa" stroke="#777" stroke-width=".9"/><path d="M0.3 6.8 L6 6.8 M4 4.6 L6.3 6.8 L4 9" fill="none" stroke="#3c3c3c" stroke-width="1.1"/><circle cx="10.6" cy="11.2" r="1.4" fill="#ddd" stroke="#888" stroke-width=".6"/></svg><div style="left:355px;top:33px;width:1px;height:16px;background:#cfcdca;"></div><div style="left:356px;top:33px;width:1px;height:16px;background:#fafafa;"></div><svg style="left:362px;top:34px;" width="14" height="14" viewBox="0 0 14 14"><path d="M3.5 1 L9.2 1 L12.2 4 L12.2 12.5 L3.5 12.5 Z" fill="#f4f4f4" stroke="#333" stroke-width="1"/><path d="M9 1 L9 4.2 L12.2 4.2" fill="none" stroke="#333" stroke-width=".8"/><circle cx="4.2" cy="5.2" r="3" fill="#6bc3f2" stroke="#1d5d93" stroke-width="1"/><path d="M6.3 7.5 L9.4 11" stroke="#7a3d10" stroke-width="1.8"/><rect x="8.6" y="9.2" width="2.4" height="2.6" fill="#1a1a1a"/></svg><svg style="left:329.5px;top:55.5px;" width="7.5" height="7.5" viewBox="0 0 7.5 7.5"><rect x=".5" y=".5" width="6.3" height="6.3" rx="1.2" fill="#e6e5e3" stroke="#777" stroke-width=".8"/><path d="M2.2 5 L4.8 2.4 M3.2 2.3 L4.9 2.3 L4.9 4" fill="none" stroke="#666" stroke-width=".7"/></svg><svg style="left:339.0px;top:55.5px;" width="7.5" height="7.5" viewBox="0 0 7.5 7.5"><rect x=".5" y=".5" width="6.3" height="6.3" rx="1.2" fill="#e6e5e3" stroke="#666" stroke-width=".8"/><path d="M2 2 L5.3 5.3 M5.3 2 L2 5.3" stroke="#333" stroke-width="1"/></svg><div style="left:198px;top:66px;width:150px;height:89px;background:#fff;border:1px solid #b3b0ad;"></div><div class="sel" style="left:199px;top:67px;width:148px;height:11px;"></div><svg style="left:268px;top:156.5px;" width="10" height="2" viewBox="0 0 10 2"><rect x="0" y="0" width="1" height="1" fill="#b5b3b0"/><rect x="2" y="0" width="1" height="1" fill="#b5b3b0"/><rect x="4" y="0" width="1" height="1" fill="#b5b3b0"/><rect x="6" y="0" width="1" height="1" fill="#b5b3b0"/><rect x="8" y="0" width="1" height="1" fill="#b5b3b0"/></svg><svg style="left:268px;top:158.5px;" width="10" height="2" viewBox="0 0 10 2"><rect x="0" y="0" width="1" height="1" fill="#b5b3b0"/><rect x="2" y="0" width="1" height="1" fill="#b5b3b0"/><rect x="4" y="0" width="1" height="1" fill="#b5b3b0"/><rect x="6" y="0" width="1" height="1" fill="#b5b3b0"/><rect x="8" y="0" width="1" height="1" fill="#b5b3b0"/></svg><svg style="left:329.5px;top:161px;" width="7.5" height="7.5" viewBox="0 0 7.5 7.5"><rect x=".5" y=".5" width="6.3" height="6.3" rx="1.2" fill="#e6e5e3" stroke="#777" stroke-width=".8"/><path d="M2.2 5 L4.8 2.4 M3.2 2.3 L4.9 2.3 L4.9 4" fill="none" stroke="#666" stroke-width=".7"/></svg><svg style="left:339.0px;top:161px;" width="7.5" height="7.5" viewBox="0 0 7.5 7.5"><rect x=".5" y=".5" width="6.3" height="6.3" rx="1.2" fill="#e6e5e3" stroke="#666" stroke-width=".8"/><path d="M2 2 L5.3 5.3 M5.3 2 L2 5.3" stroke="#333" stroke-width="1"/></svg><svg style="left:349px;top:160px;" width="2" height="12" viewBox="0 0 2 12"><rect x="0" y="0" width="1" height="1" fill="#c3c1be"/><rect x="0" y="2" width="1" height="1" fill="#c3c1be"/><rect x="0" y="4" width="1" height="1" fill="#c3c1be"/><rect x="0" y="6" width="1" height="1" fill="#c3c1be"/><rect x="0" y="8" width="1" height="1" fill="#c3c1be"/><rect x="0" y="10" width="1" height="1" fill="#c3c1be"/></svg><svg style="left:204px;top:178.5px;" width="12" height="13" viewBox="0 0 12 13"><path d="M1.5 1 L7 1 L10.2 4.2 L10.2 12 L1.5 12 Z" fill="#fdfdfd" stroke="#555" stroke-width=".9"/><path d="M7 1 L7 4.3 L10.2 4.3" fill="none" stroke="#555" stroke-width=".8"/></svg><svg style="left:224.3px;top:178.3px;" width="13" height="12" viewBox="0 0 14 13"><path d="M2.2 2.2 L11.6 10.6 M11.6 2.2 L2.2 10.6" stroke="#6e6e6e" stroke-width="3.3" stroke-linecap="round"/><path d="M2.4 2.4 L11.4 10.4 M11.4 2.4 L2.4 10.4" stroke="#9a9a9a" stroke-width="1.6" stroke-linecap="round"/></svg><div style="left:198px;top:199.5px;width:150px;height:72.5px;background:#fff;border:1px solid #b3b0ad;"></div><div class="hd" style="left:199px;top:200.5px;width:148px;height:13.5px;"></div><div style="left:226px;top:202px;width:1px;height:10.5px;background:#cdcbc8;"></div><div style="left:285.5px;top:202px;width:1px;height:10.5px;background:#cdcbc8;"></div><div style="left:343px;top:202px;width:1px;height:10.5px;background:#cdcbc8;"></div><div class="sb" style="left:198px;top:273.5px;width:150px;height:9px;"></div><div class="thh" style="left:206px;top:273.5px;width:62.5px;height:9px;"></div><div class="btn" style="left:198px;top:273.5px;width:8.5px;height:9px;"></div><svg style="left:199px;top:274px;" width="8" height="8" viewBox="0 0 8 8"><path d="M5 2 L3 4 L5 6" fill="none" stroke="#b5b5b5" stroke-width="1"/></svg><div class="btn" style="left:339.5px;top:273.5px;width:8.5px;height:9px;"></div><svg style="left:340px;top:274px;" width="8" height="8" viewBox="0 0 8 8"><path d="M3 2 L5 4 L3 6" fill="none" stroke="#333" stroke-width="1.1"/></svg><svg style="left:234px;top:276px;" width="6" height="4" viewBox="0 0 6 4"><rect x="0" y="0" width="1" height="4" fill="#4d74ab"/><rect x="2" y="0" width="1" height="4" fill="#4d74ab"/><rect x="4" y="0" width="1" height="4" fill="#4d74ab"/></svg><div style="left:351px;top:52.5px;width:270px;height:229.5px;background:#fff;border:1px solid #b3b0ad;"></div><div style="left:351.5px;top:53.5px;width:21px;height:227.5px;background:linear-gradient(90deg,#bdbab8,#dcdbda 14%,#e8e8e7 40%,#efefee);"></div><div style="left:376px;top:95.5px;width:243px;height:10.2px;background:#ffff9e;"></div><svg style="left:469px;top:189px;" width="9" height="14" viewBox="0 0 9 14"><path d="M1 0.8 L1 11 L3.4 8.8 L5.2 12.6 L6.8 11.9 L5 8.2 L8.2 8.2 Z" fill="#fff" stroke="#111" stroke-width="1" stroke-linejoin="round"/></svg><svg style="left:779px;top:55.5px;" width="7.5" height="7.5" viewBox="0 0 7.5 7.5"><rect x=".5" y=".5" width="6.3" height="6.3" rx="1.2" fill="#e6e5e3" stroke="#777" stroke-width=".8"/><path d="M2.2 5 L4.8 2.4 M3.2 2.3 L4.9 2.3 L4.9 4" fill="none" stroke="#666" stroke-width=".7"/></svg><svg style="left:788.5px;top:55.5px;" width="7.5" height="7.5" viewBox="0 0 7.5 7.5"><rect x=".5" y=".5" width="6.3" height="6.3" rx="1.2" fill="#e6e5e3" stroke="#666" stroke-width=".8"/><path d="M2 2 L5.3 5.3 M5.3 2 L2 5.3" stroke="#333" stroke-width="1"/></svg><div style="left:624px;top:66.5px;width:174px;height:99px;background:#fff;border:1px solid #b3b0ad;"></div><div class="hd" style="left:625px;top:67.5px;width:172px;height:14px;"></div><div style="left:653.5px;top:69px;width:1px;height:11px;background:#cdcbc8;"></div><div style="left:711px;top:69px;width:1px;height:11px;background:#cdcbc8;"></div><div style="left:795px;top:69px;width:1px;height:11px;background:#cdcbc8;"></div><div class="sel" style="left:625px;top:81.5px;width:172px;height:11px;"></div><div style="left:625px;top:92.5px;width:172px;height:11px;background:#dddcda;"></div><svg style="left:706px;top:167.5px;" width="10" height="2" viewBox="0 0 10 2"><rect x="0" y="0" width="1" height="1" fill="#b5b3b0"/><rect x="2" y="0" width="1" height="1" fill="#b5b3b0"/><rect x="4" y="0" width="1" height="1" fill="#b5b3b0"/><rect x="6" y="0" width="1" height="1" fill="#b5b3b0"/><rect x="8" y="0" width="1" height="1" fill="#b5b3b0"/></svg><svg style="left:706px;top:169.5px;" width="10" height="2" viewBox="0 0 10 2"><rect x="0" y="0" width="1" height="1" fill="#b5b3b0"/><rect x="2" y="0" width="1" height="1" fill="#b5b3b0"/><rect x="4" y="0" width="1" height="1" fill="#b5b3b0"/><rect x="6" y="0" width="1" height="1" fill="#b5b3b0"/><rect x="8" y="0" width="1" height="1" fill="#b5b3b0"/></svg><svg style="left:622px;top:160px;" width="2" height="12" viewBox="0 0 2 12"><rect x="0" y="0" width="1" height="1" fill="#c3c1be"/><rect x="0" y="2" width="1" height="1" fill="#c3c1be"/><rect x="0" y="4" width="1" height="1" fill="#c3c1be"/><rect x="0" y="6" width="1" height="1" fill="#c3c1be"/><rect x="0" y="8" width="1" height="1" fill="#c3c1be"/><rect x="0" y="10" width="1" height="1" fill="#c3c1be"/></svg><svg style="left:779px;top:172px;" width="7.5" height="7.5" viewBox="0 0 7.5 7.5"><rect x=".5" y=".5" width="6.3" height="6.3" rx="1.2" fill="#e6e5e3" stroke="#777" stroke-width=".8"/><path d="M2.2 5 L4.8 2.4 M3.2 2.3 L4.9 2.3 L4.9 4" fill="none" stroke="#666" stroke-width=".7"/></svg><svg style="left:788.5px;top:172px;" width="7.5" height="7.5" viewBox="0 0 7.5 7.5"><rect x=".5" y=".5" width="6.3" height="6.3" rx="1.2" fill="#e6e5e3" stroke="#666" stroke-width=".8"/><path d="M2 2 L5.3 5.3 M5.3 2 L2 5.3" stroke="#333" stroke-width="1"/></svg><div style="left:624px;top:184px;width:163.5px;height:98px;background:#edeceb;border:1px solid #b3b0ad;"></div><div class="hd" style="left:625px;top:185px;width:161.5px;height:14px;"></div><div style="left:705.5px;top:187px;width:1px;height:10.5px;background:#cdcbc8;"></div><svg style="left:695.5px;top:188.5px;" width="8" height="6" viewBox="0 0 8 6"><path d="M1 1.2 L3.8 4 L6.6 1.2" fill="none" stroke="#666" stroke-width=".9"/></svg><div style="left:637px;top:198.7px;width:149.5px;height:11px;background:#808080;"></div><div style="left:625px;top:209.7px;width:161.5px;height:11.3px;background:#dfdedc;"></div><div style="left:625px;top:232.2px;width:161.5px;height:11px;background:#dfdedc;"></div><div style="left:637px;top:243.2px;width:149.5px;height:22.5px;background:#808080;"></div><svg style="left:628px;top:202px;" width="7" height="6" viewBox="0 0 7 6"><path d="M0.6 1 L6.4 1 L3.5 4.6 Z" fill="#f4f4f4" stroke="#8d8d8d" stroke-width=".8"/></svg><svg style="left:629.5px;top:246px;" width="6" height="7" viewBox="0 0 6 7"><path d="M1 0.6 L4.6 3.5 L1 6.4 Z" fill="#f4f4f4" stroke="#8d8d8d" stroke-width=".8"/></svg><svg style="left:628px;top:258px;" width="7" height="6" viewBox="0 0 7 6"><path d="M0.6 1 L6.4 1 L3.5 4.6 Z" fill="#f4f4f4" stroke="#8d8d8d" stroke-width=".8"/></svg><svg style="left:641px;top:272.5px;" width="6" height="7" viewBox="0 0 6 7"><path d="M1 0.6 L4.6 3.5 L1 6.4 Z" fill="#f4f4f4" stroke="#8d8d8d" stroke-width=".8"/></svg><div class="sb" style="left:789px;top:184px;width:9px;height:98px;"></div><div class="btn" style="left:789px;top:184px;width:9px;height:8.5px;"></div><svg style="left:789.5px;top:184.5px;" width="8" height="8" viewBox="0 0 8 8"><path d="M2 5 L4 3 L6 5" fill="none" stroke="#555" stroke-width="1"/></svg><div class="th" style="left:789px;top:192px;width:9px;height:21.5px;"></div><svg style="left:791.5px;top:200px;" width="4" height="6" viewBox="0 0 4 6"><rect x="0" y="0" width="4" height="1" fill="#4d74ab"/><rect x="0" y="2" width="4" height="1" fill="#4d74ab"/><rect x="0" y="4" width="4" height="1" fill="#4d74ab"/></svg><div class="btn" style="left:789px;top:273.5px;width:9px;height:8.5px;"></div><svg style="left:789.5px;top:274px;" width="8" height="8" viewBox="0 0 8 8"><path d="M2 3 L4 5 L6 3" fill="none" stroke="#777" stroke-width="1"/></svg><svg style="left:779px;top:289.5px;" width="7.5" height="7.5" viewBox="0 0 7.5 7.5"><rect x=".5" y=".5" width="6.3" height="6.3" rx="1.2" fill="#e6e5e3" stroke="#777" stroke-width=".8"/><path d="M2.2 5 L4.8 2.4 M3.2 2.3 L4.9 2.3 L4.9 4" fill="none" stroke="#666" stroke-width=".7"/></svg><svg style="left:788.5px;top:289.5px;" width="7.5" height="7.5" viewBox="0 0 7.5 7.5"><rect x=".5" y=".5" width="6.3" height="6.3" rx="1.2" fill="#e6e5e3" stroke="#666" stroke-width=".8"/><path d="M2 2 L5.3 5.3 M5.3 2 L2 5.3" stroke="#333" stroke-width="1"/></svg><div style="left:197px;top:300px;width:601.5px;height:71px;background:#fff;"></div><div style="left:197px;top:299.5px;width:601.5px;height:1px;background:#d2d0cd;"></div><div style="left:197px;top:359px;width:592px;height:1px;background:#ececec;"></div><div style="left:197px;top:371px;width:602px;height:1px;background:#b3b1ae;"></div><div style="left:197px;top:372px;width:602px;height:18px;background:#eae9e7;"></div><div class="sb" style="left:789px;top:300.5px;width:9px;height:59px;"></div><div class="btn" style="left:789px;top:300.5px;width:9px;height:8.5px;"></div><svg style="left:789.5px;top:301px;" width="8" height="8" viewBox="0 0 8 8"><path d="M2 5 L4 3 L6 5" fill="none" stroke="#222" stroke-width="1.2"/></svg><div class="th" style="left:789px;top:324.5px;width:9px;height:26.5px;"></div><svg style="left:791.5px;top:335px;" width="4" height="6" viewBox="0 0 4 6"><rect x="0" y="0" width="4" height="1" fill="#4d74ab"/><rect x="0" y="2" width="4" height="1" fill="#4d74ab"/><rect x="0" y="4" width="4" height="1" fill="#4d74ab"/></svg><div class="btn" style="left:789px;top:351px;width:9px;height:8.5px;"></div><svg style="left:789.5px;top:351.5px;" width="8" height="8" viewBox="0 0 8 8"><path d="M2 3 L4 5 L6 3" fill="none" stroke="#777" stroke-width="1"/></svg><div style="left:198.5px;top:372.5px;width:42.5px;height:15px;background:linear-gradient(#e9e8e6,#dedcda);border:1px solid #c6c4c1;border-top:none;border-radius:0 0 2px 2px;"></div><div style="left:241.5px;top:372.5px;width:59px;height:15px;background:linear-gradient(#e9e8e6,#dedcda);border:1px solid #c6c4c1;border-top:none;border-radius:0 0 2px 2px;"></div><div style="left:303.5px;top:371px;width:39.5px;height:18px;background:#f6f5f4;border:1px solid #a9a7a4;border-top:none;border-bottom:2px solid #7ba3da;border-radius:0 0 3px 3px;"></div>
<span class="t b w" style="left:441.5px;top:1.0px;transform:scaleX(1.131);text-shadow:0 0 1px #5578ad;">Qt Script Debugger</span>
<span class="t" style="left:202px;top:14.5px;transform:scaleX(1.022);">Debug</span>
<span class="t" style="left:234px;top:14.5px;transform:scaleX(0.989);">Search</span>
<span class="t" style="left:267px;top:14.5px;transform:scaleX(1.065);">View</span>
<span class="t" style="left:199px;top:52.9px;transform:scaleX(1.048);">Loaded Scripts</span>
<span class="t w" style="left:212px;top:67.0px;transform:scaleX(1.034);">examples/echo_bot.js</span>
<span class="t" style="left:212px;top:78.0px;transform:scaleX(1.028);">:/js/create_handlers.js</span>
<span class="t" style="left:199px;top:158.5px;transform:scaleX(1.038);">Breakpoints</span>
<span class="t" style="left:201px;top:201.5px;transform:scaleX(0.962);">ID</span>
<span class="t" style="left:230px;top:201.5px;transform:scaleX(1.020);">Location</span>
<span class="t" style="left:288.5px;top:201.5px;transform:scaleX(1.041);">Condition</span>
<span class="t" style="left:199px;top:287.0px;transform:scaleX(0.985);">Console</span>
<span class="t m" style="left:201px;top:299.5px;transform:scaleX(0.931);">Type ".help" for help.</span>
<span class="t m" style="left:201px;top:319.5px;transform:scaleX(0.937);">Debugger invoked from examples/echo_bot.js, line 4.</span>
<span class="t m" style="left:201px;top:329.5px;transform:scaleX(0.934);">4             debugger;</span>
<span class="t m" style="left:201px;top:339.5px;transform:scaleX(0.935);">5             mf.chat(message);</span>
<span class="t m" style="left:201px;top:359.0px;transform:scaleX(0.944);">qsdb&gt;</span>
<span class="t" style="left:203px;top:373.5px;transform:scaleX(0.983);">Error Log</span>
<span class="t" style="left:246px;top:373.5px;transform:scaleX(1.006);">Debug Output</span>
<span class="t" style="left:308px;top:374.0px;transform:scaleX(0.985);">Console</span>
<span class="t" style="left:626px;top:52.9px;transform:scaleX(0.963);">Stack</span>
<span class="t g" style="left:628px;top:68.5px;transform:scaleX(0.957);">Level</span>
<span class="t g" style="left:657px;top:68.5px;transform:scaleX(1.039);">Name</span>
<span class="t g" style="left:715px;top:68.5px;transform:scaleX(1.036);">Location</span>
<span class="t w" style="left:627.2px;top:81.3px;transform:scaleX(0.930);">0</span>
<span class="t w" style="left:657px;top:81.3px;transform:scaleX(1.045);">&lt;anonymou...</span>
<span class="t w" style="left:714.8px;top:81.3px;transform:scaleX(1.017);">echo_bot.js:5</span>
<span class="t g2" style="left:627.5px;top:92.3px;transform:scaleX(0.757);">1</span>
<span class="t g2" style="left:657px;top:92.3px;transform:scaleX(1.045);">&lt;anonymou...</span>
<span class="t g2" style="left:714.8px;top:92.3px;transform:scaleX(1.113);">&lt;native&gt;:-1</span>
<span class="t" style="left:626px;top:170.0px;transform:scaleX(0.980);">Locals</span>
<span class="t g" style="left:627.5px;top:185.5px;transform:scaleX(1.016);">Name</span>
<span class="t g" style="left:709.4px;top:185.5px;transform:scaleX(1.048);">Value</span>
<span class="t b w" style="left:638.5px;top:198.5px;transform:scaleX(1.064);">Scope</span>
<span class="t g2" style="left:650px;top:209.5px;transform:scaleX(0.982);">__proto__</span>
<span class="t g2" style="left:708.4px;top:209.5px;transform:scaleX(1.076);">null</span>
<span class="t g2" style="left:650px;top:220.5px;transform:scaleX(1.039);">message</span>
<span class="t g2" style="left:708.4px;top:220.5px;transform:scaleX(1.098);">hi</span>
<span class="t g2" style="left:650px;top:232.0px;transform:scaleX(1.030);">username</span>
<span class="t g2" style="left:708.4px;top:232.0px;transform:scaleX(1.037);">superjoe30</span>
<span class="t b w" style="left:638.5px;top:243.5px;transform:scaleX(1.124);">Scope (1)</span>
<span class="t b w" style="left:638.5px;top:254.5px;transform:scaleX(1.084);">this</span>
<span class="t g2" style="left:650px;top:271.0px;transform:scaleX(1.034);">Array</span>
<span class="t g2" style="left:708.4px;top:265.5px;transform:scaleX(1.102);">function Array() {</span>
<span class="t g2" style="left:708.4px;top:276.3px;transform:scaleX(1.071);clip-path:inset(0 0 6.8px 0);">{ ...2 more lines...}</span>
<span class="t tl" style="left:365.6px;top:53.8px;transform:scaleX(1.081);">1</span>
<span class="t tl" style="left:365.6px;top:63.8px;transform:scaleX(1.081);">2</span>
<span class="t" style="left:376px;top:63.8px;transform:scaleX(1.046);">mf.onChat(<span class="kw">function</span>(username, message) {</span>
<span class="t tl" style="left:365.6px;top:73.8px;transform:scaleX(1.081);">3</span>
<span class="t" style="left:385.3px;top:73.8px;transform:scaleX(1.042);">mf.debug(<span class="st">"Got chat message: "</span> + message);</span>
<span class="t tl" style="left:365.6px;top:83.8px;transform:scaleX(1.081);">4</span>
<span class="t" style="left:385.3px;top:83.8px;transform:scaleX(0.995);"><span class="kw">debugger</span>;</span>
<span class="t tl" style="left:365.6px;top:93.8px;transform:scaleX(1.081);">5</span>
<span class="t" style="left:385.3px;top:93.8px;transform:scaleX(1.044);">mf.chat(message);</span>
<span class="t tl" style="left:365.6px;top:103.8px;transform:scaleX(1.081);">6</span>
<span class="t" style="left:376px;top:103.8px;transform:scaleX(1.249);">});</span>
<span class="t tl" style="left:365.6px;top:113.8px;transform:scaleX(1.081);">7</span>
<span class="t tl" style="left:365.6px;top:123.8px;transform:scaleX(1.081);">8</span>
<span class="t" style="left:376px;top:123.8px;transform:scaleX(1.049);">mf.onConnected(<span class="kw">function</span>() {</span>
<span class="t tl" style="left:365.6px;top:133.8px;transform:scaleX(1.081);">9</span>
<span class="t" style="left:385.3px;top:133.8px;transform:scaleX(1.029);">mf.debug(<span class="st">"Connected successfully."</span>);</span>
<span class="t tl" style="left:361.3px;top:143.8px;transform:scaleX(1.007);">10</span>
<span class="t" style="left:376px;top:143.8px;transform:scaleX(1.249);">});</span>
<span class="t tl" style="left:361.3px;top:153.8px;transform:scaleX(1.059);">11</span>
<div style="left:0px;top:435.7px;width:800px;height:14.3px;background:#fefefe;"></div><svg style="left:1px;top:436.5px;" width="13" height="13" viewBox="0 0 13 13"><circle cx="6.5" cy="6.5" r="4" fill="none" stroke="#e9852a" stroke-width="2.2"/><path d="M6.5 6.5 L6.5 0 M6.5 6.5 L0.8 9.8 M6.5 6.5 L12.2 9.8" stroke="#fefefe" stroke-width="1.3"/><circle cx="2.2" cy="4" r="1.6" fill="#d9381e"/><circle cx="10.8" cy="4" r="1.6" fill="#f2c02b"/><circle cx="6.5" cy="11.5" r="1.6" fill="#e9852a"/></svg><div style="left:14.5px;top:435.5px;width:22px;height:14.5px;background:#dbe6f4;"></div><div style="left:16px;top:437px;width:3.5px;height:11px;background:#6f9ad3;"></div><svg style="left:23px;top:437px;" width="12" height="11" viewBox="0 0 12 11"><rect x=".6" y=".6" width="10.4" height="9" fill="#efe9dd" stroke="#8a96a8" stroke-width=".9"/><rect x=".6" y=".6" width="10.4" height="2.4" fill="#4d7fc4"/></svg><div style="left:37.5px;top:435.5px;width:70px;height:14.5px;background:#a9a6a2;border:1px solid #6e6c69;"></div><div style="left:38px;top:436px;width:22.5px;height:14px;background:#efeeec;"></div><div style="left:60.5px;top:436px;width:1px;height:14px;background:#6e6c69;"></div><div style="left:84px;top:436px;width:1px;height:14px;background:#8a8885;"></div><svg style="left:38.5px;top:436px;" width="22" height="14" viewBox="0 0 22 14"><rect x=".8" y="1" width="9" height="5" fill="#fff" stroke="#111" stroke-width="1"/><rect x=".8" y="7" width="9" height="6" fill="#fff" stroke="#111" stroke-width="1"/><rect x="10.5" y="1.2" width="10.5" height="6.3" fill="#fff" stroke="#111" stroke-width="1"/><rect x="6" y="5" width="9" height="2.6" fill="#ddd" stroke="#111" stroke-width=".9"/></svg><svg style="left:109.5px;top:438px;" width="3" height="10" viewBox="0 0 3 10"><rect x="0" y="0" width="1" height="1" fill="#bdbbb8"/><rect x="0" y="2" width="1" height="1" fill="#bdbbb8"/><rect x="0" y="4" width="1" height="1" fill="#bdbbb8"/><rect x="0" y="6" width="1" height="1" fill="#bdbbb8"/><rect x="0" y="8" width="1" height="1" fill="#bdbbb8"/><rect x="2" y="0" width="1" height="1" fill="#bdbbb8"/><rect x="2" y="2" width="1" height="1" fill="#bdbbb8"/><rect x="2" y="4" width="1" height="1" fill="#bdbbb8"/><rect x="2" y="6" width="1" height="1" fill="#bdbbb8"/><rect x="2" y="8" width="1" height="1" fill="#bdbbb8"/></svg><svg style="left:118.5px;top:437px;" width="10" height="10" viewBox="0 0 10 10"><circle cx="5" cy="5" r="4.4" fill="#e8741c"/><circle cx="5.3" cy="4.6" r="2.5" fill="#2d56b5"/><path d="M1 5 C1 8 4 9.6 6.8 9 C4 8.6 3 7 3 5 Z" fill="#f4b32a"/></svg><svg style="left:177px;top:437.5px;" width="11" height="10" viewBox="0 0 11 10"><rect x=".5" y=".5" width="9.6" height="8.6" rx="1" fill="#3a3a3a" stroke="#8d8d8d" stroke-width=".9"/><rect x="1.8" y="2.2" width="7" height="5.4" fill="#1e1e1e"/><path d="M2.8 3.4 L4.4 4.6 L2.8 5.8" fill="none" stroke="#cfc" stroke-width=".6"/></svg><svg style="left:235px;top:437.5px;" width="11" height="10" viewBox="0 0 11 10"><rect x=".5" y=".5" width="9.6" height="8.6" rx="1" fill="#3a3a3a" stroke="#8d8d8d" stroke-width=".9"/><rect x="1.8" y="2.2" width="7" height="5.4" fill="#1e1e1e"/><path d="M2.8 3.4 L4.4 4.6 L2.8 5.8" fill="none" stroke="#cfc" stroke-width=".6"/></svg><svg style="left:292.5px;top:437px;" width="11" height="11" viewBox="0 0 11 11"><rect x=".8" y=".8" width="9" height="9.4" rx="1.5" fill="#5fae34" stroke="#2f6f1c" stroke-width=".8"/><rect x="2.6" y="2.6" width="4.2" height="5" fill="#e9f4df"/><circle cx="8" cy="8" r="2" fill="#e9f4df" stroke="#999" stroke-width=".4"/></svg><svg style="left:353.5px;top:437.5px;" width="10.88" height="9.520000000000001" viewBox="0 0 16 14"><path d="M2 2 L13.5 12 M13.5 2 L2 12" stroke="#ee8a14" stroke-width="3.4" stroke-linecap="round"/><path d="M2 2 L13.5 12 M13.5 2 L2 12" stroke="#fbc84e" stroke-width="1.3" stroke-linecap="round"/><circle cx="3" cy="11.5" r="1.4" fill="#d33a1c"/></svg><svg style="left:411px;top:437px;" width="11" height="11" viewBox="0 0 11 11"><path d="M5.5 0.6 L10.4 2.8 L5.5 5 L0.6 2.8 Z" fill="#5da33a"/><path d="M0.6 2.8 L5.5 5 L5.5 10.4 L0.6 8 Z" fill="#6b4a2e"/><path d="M10.4 2.8 L5.5 5 L5.5 10.4 L10.4 8 Z" fill="#4d331e"/><path d="M0.6 2.8 L5.5 5 L10.4 2.8 L10.4 3.8 L5.5 6 L0.6 3.8 Z" fill="#467f2a"/></svg><div style="left:466px;top:435.5px;width:58px;height:14.5px;background:linear-gradient(#cfcdc9,#d9d7d3);border:1px solid #a19f9b;border-radius:2px;"></div><svg style="left:471.5px;top:438px;" width="10" height="9" viewBox="0 0 10 9"><rect x=".6" y=".6" width="8.6" height="7.6" fill="#f3efe6" stroke="#555f73" stroke-width=".9"/><rect x=".6" y=".6" width="8.6" height="2.2" fill="#3f6fb8"/></svg><svg style="left:574px;top:437.5px;" width="13" height="11" viewBox="0 0 13 11"><path d="M1 9.5 L2.2 1.5 L10.8 1.5 L12 9.5 Z" fill="#b1b1b1" stroke="#8a8a8a" stroke-width=".7"/><path d="M4.2 4.2 L6.5 6.5 L8.8 4.2" fill="none" stroke="#e8e8e8" stroke-width="1.1"/></svg><svg style="left:594px;top:436.5px;" width="15.2" height="13.299999999999999" viewBox="0 0 16 14"><path d="M2 2 L13.5 12 M13.5 2 L2 12" stroke="#ee8a14" stroke-width="3.4" stroke-linecap="round"/><path d="M2 2 L13.5 12 M13.5 2 L2 12" stroke="#fbc84e" stroke-width="1.3" stroke-linecap="round"/><circle cx="3" cy="11.5" r="1.4" fill="#d33a1c"/></svg><div style="left:609.5px;top:436px;width:13.5px;height:14px;background:#d5d3cf;border-radius:2px;"></div><svg style="left:610.5px;top:437px;" width="12" height="12" viewBox="0 0 12 12"><circle cx="6" cy="6" r="5.2" fill="#8fb4e4" stroke="#3d67a6" stroke-width="1"/><path d="M2 8.5 L6 4 L10 6.5 L8.5 9.5 L4 10.2 Z" fill="#dfe9f6"/><rect x="1" y="8.5" width="4" height="3" fill="#555"/></svg><svg style="left:622.8px;top:437.2px;" width="11.5" height="11.5" viewBox="0 0 11 11"><path d="M3 0.8 L5.4 2.4 L3 4 L0.6 2.4 Z M8 0.8 L10.4 2.4 L8 4 L5.6 2.4 Z M3 4.2 L5.4 5.8 L3 7.4 L0.6 5.8 Z M8 4.2 L10.4 5.8 L8 7.4 L5.6 5.8 Z" fill="#2f8fe0"/><circle cx="8.2" cy="8.4" r="2.2" fill="#37a337"/><path d="M7.2 8.4 L8 9.3 L9.3 7.6" fill="none" stroke="#fff" stroke-width=".7"/></svg><svg style="left:650px;top:438px;" width="12" height="11" viewBox="0 0 12 11"><rect x="0.0" y="8.0" width="2" height="2.0" fill="#2b5fb4"/><rect x="2.6" y="5.8" width="2" height="4.2" fill="#2b5fb4"/><rect x="5.2" y="3.6" width="2" height="6.4" fill="#2b5fb4"/><rect x="7.8" y="1.4" width="2" height="8.6" fill="#2b5fb4"/></svg><svg style="left:662.5px;top:436.5px;" width="13" height="13" viewBox="0 0 13 13"><rect x="1.5" y="1.8" width="6" height="10" rx=".8" fill="#e9e9e9" stroke="#555" stroke-width=".9"/><rect x="3.3" y=".6" width="2.6" height="1.4" fill="#555"/><rect x="2.5" y="3" width="2.2" height="8" fill="#3b6fc4"/><path d="M6.5 12 L8.5 8.5 L11.5 8.5 L12.5 12 Z" fill="#ddd" stroke="#888" stroke-width=".6"/></svg><svg style="left:678.5px;top:439px;" width="8" height="8" viewBox="0 0 8 8"><circle cx="4" cy="4" r="3.2" fill="#9a9a9a"/><path d="M4 .8 A3.2 3.2 0 0 1 4 7.2 Z" fill="#c9c9c9"/></svg>
<span class="t" style="left:133px;top:436.5px;transform:scaleX(1.037);">Qt 4.7....</span>
<span class="t" style="left:192px;top:436.5px;transform:scaleX(0.990);">andy@...</span>
<span class="t" style="left:250px;top:436.5px;transform:scaleX(1.020);">andy@...</span>
<span class="t" style="left:308.8px;top:436.5px;transform:scaleX(1.012);">Game....</span>
<span class="t" style="left:367px;top:436.5px;transform:scaleX(1.012);">XChat: ...</span>
<span class="t" style="left:426px;top:436.5px;transform:scaleX(1.052);">Minecr...</span>
<span class="t" style="left:485px;top:436.5px;transform:scaleX(1.053);">Qt Scri...</span>
<span class="t" style="left:528px;top:436.5px;transform:scaleX(1.071);">No activity</span>
<span class="t sm" style="left:634px;top:436.8px;transform:scaleX(0.888);">USA</span>
<span class="t" style="left:688px;top:436.5px;transform:scaleX(0.954);">52 °F</span>
<span class="t" style="left:715px;top:436.5px;transform:scaleX(1.015);">Fri Feb 11, 12:00 AM</span>
</body></html>
